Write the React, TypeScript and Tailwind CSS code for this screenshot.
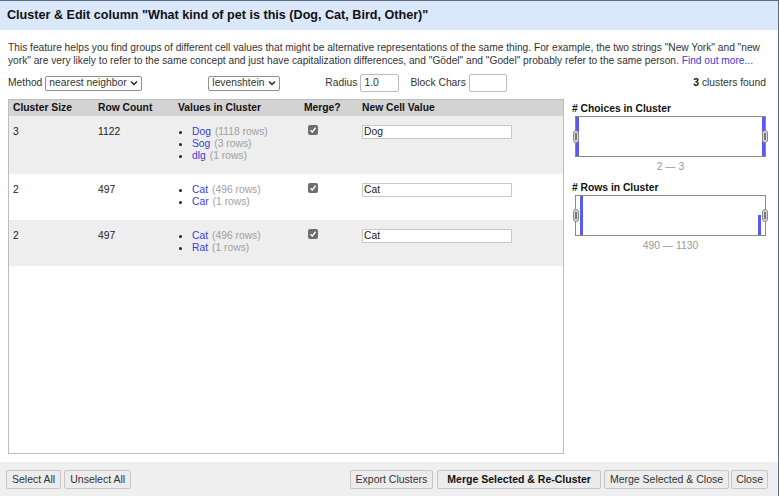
import React from 'react'

type Item = { value: string; count: number }
type Cluster = { size: number; rows: number; items: Item[]; newValue: string }

const clusters: Cluster[] = [
  { size: 3, rows: 1122, newValue: 'Dog', items: [{ value: 'Dog', count: 1118 }, { value: 'Sog', count: 3 }, { value: 'dlg', count: 1 }] },
  { size: 2, rows: 497, newValue: 'Cat', items: [{ value: 'Cat', count: 496 }, { value: 'Car', count: 1 }] },
  { size: 2, rows: 497, newValue: 'Cat', items: [{ value: 'Cat', count: 496 }, { value: 'Rat', count: 1 }] },
]

function FakeSelect({ label, className }: { label: string; className: string }) {
  return (
    <div className={`h-[15px] border border-[#8f8f8f] rounded-[2px] bg-white flex items-center pl-[3px] pr-[3px] justify-between whitespace-nowrap ${className}`}>
      <span className="leading-none">{label}</span>
      <svg width="8" height="6" viewBox="0 0 8 6"><path d="M1 1.5 L4 4.5 L7 1.5" fill="none" stroke="#222" strokeWidth="1.4" /></svg>
    </div>
  )
}

function Check() {
  return (
    <div className="w-[10px] h-[10px] rounded-[2px] bg-[#6e6e6e] flex items-center justify-center">
      <svg width="8" height="8" viewBox="0 0 8 8"><path d="M1.5 4.2 L3.3 6 L6.6 1.8" fill="none" stroke="#fff" strokeWidth="1.4" /></svg>
    </div>
  )
}

function Handle({ side }: { side: 'l' | 'r' }) {
  return (
    <div className={`absolute top-[13px] w-[6px] h-[13px] rounded-[3px] bg-[#d8d8d8] border border-[#888] flex items-center justify-center ${side === 'l' ? 'left-[-3px]' : 'right-[-3px]'}`}>
      <div className="w-[2px] h-[7px] bg-[#777]" />
    </div>
  )
}

function Facet({ title, range, bars }: { title: string; range: string; bars: React.ReactNode }) {
  return (
    <div className="flex flex-col">
      <div className="font-bold text-[#111] leading-[13px] pl-[1px]">{title}</div>
      <div className="relative ml-[4px] mt-[1px] w-[191px] h-[41px] border border-[#8a8a8a] bg-white">
        {bars}
        <Handle side="l" />
        <Handle side="r" />
      </div>
      <div className="text-center text-[#999] leading-[13px] mt-[3px] ml-[4px] w-[191px]">{range}</div>
    </div>
  )
}

function Btn({ children, bold, className = '' }: { children: React.ReactNode; bold?: boolean; className?: string }) {
  return (
    <button className={`h-[19px] border border-[#c6c6c6] rounded-[2px] bg-[#ececec] text-[10.5px] leading-none whitespace-nowrap ${bold ? 'font-bold px-[9px] text-[#111]' : 'px-[5px] text-[#333]'} ${className}`}>
      {children}
    </button>
  )
}

export default function App() {
  return (
    <div className="w-[779px] h-[496px] flex flex-col bg-white border-t border-r border-[#5d6c7c] text-[10.3px] text-[#222] overflow-hidden" style={{ fontFamily: '"Liberation Sans", Arial, sans-serif' }}>
      <div className="h-[29px] shrink-0 bg-[#dbe7fa] flex items-center px-[7px] font-bold text-[12.6px] text-[#111] whitespace-nowrap">
        Cluster &amp; Edit column "What kind of pet is this (Dog, Cat, Bird, Other)"
      </div>

      <div className="flex-1 flex flex-col px-[8px] pt-[11px]">
        <p className="leading-[13px] text-[#333] text-[10.2px] whitespace-nowrap">
          This feature helps you find groups of different cell values that might be alternative representations of the same thing. For example, the two strings "New York" and "new<br />
          york" are very likely to refer to the same concept and just have capitalization differences, and "Gödel" and "Godel" probably refer to the same person. <span className="text-[#3b3bd6]">Find out more...</span>
        </p>

        <div className="flex items-center mt-[7px] h-[18px] text-[#333] whitespace-nowrap">
          <span>Method</span>
          <FakeSelect label="nearest neighbor" className="ml-[3px] w-[97px]" />
          <FakeSelect label="levenshtein" className="ml-[66px] w-[72px]" />
          <span className="ml-[45px]">Radius</span>
          <div className="ml-[3px] w-[39px] h-[18px] border border-[#bbb] rounded-[2px] bg-white flex items-center pl-[3px]">1.0</div>
          <span className="ml-[11px]">Block Chars</span>
          <div className="ml-[3px] w-[38px] h-[18px] border border-[#bbb] rounded-[2px] bg-white" />
          <span className="ml-auto mr-[4px]"><b className="text-[#111]">3</b> clusters found</span>
        </div>

        <div className="flex mt-[7px] gap-[7px]">
          <div className="w-[556px] h-[355px] border border-[#bdbdbd] bg-white">
            <div className="grid grid-cols-[85px_80px_126px_58px_1fr] h-[16px] bg-[#d3d3d3] font-bold text-[#111] items-center pl-[4px]">
              <div>Cluster Size</div>
              <div>Row Count</div>
              <div>Values in Cluster</div>
              <div>Merge?</div>
              <div>New Cell Value</div>
            </div>
            {clusters.map((c, i) => (
              <div key={i} className={`grid grid-cols-[85px_80px_126px_58px_1fr] pl-[4px] pt-[10px] pb-[12px] ${i % 2 === 0 ? 'bg-[#eeeeee]' : 'bg-white'}`}>
                <div className="leading-[12px]">{c.size}</div>
                <div className="leading-[12px]">{c.rows}</div>
                <ul>
                  {c.items.map(it => (
                    <li key={it.value} className="flex items-center leading-[12px] h-[12px]">
                      <span className="w-[3px] h-[3px] rounded-full bg-[#222] ml-[1px] mr-[10px]" />
                      <span className="text-[#3b3bd6]">{it.value}</span>
                      <span className="text-[#a0a0a0] ml-[4px]">({it.count} rows)</span>
                    </li>
                  ))}
                </ul>
                <div className="pl-[4px] -mt-[1px]"><Check /></div>
                <div className="-mt-[1px]">
                  <div className="w-[150px] h-[14px] border border-[#c8c8c8] bg-white flex items-center pl-[1px] leading-none">{c.newValue}</div>
                </div>
              </div>
            ))}
          </div>

          <div className="flex flex-col gap-[8px] pt-[3px]">
            <Facet
              title="# Choices in Cluster"
              range="2 — 3"
              bars={<>
                <div className="absolute left-0 top-0 bottom-0 w-[3px] bg-[#5a5af0]" />
                <div className="absolute right-0 top-0 bottom-0 w-[3px] bg-[#5a5af0]" />
              </>}
            />
            <Facet
              title="# Rows in Cluster"
              range="490 — 1130"
              bars={<>
                <div className="absolute left-[4px] top-0 bottom-0 w-[3px] bg-[#5a5af0]" />
                <div className="absolute right-[4px] bottom-0 h-[20px] w-[3px] bg-[#5a5af0]" />
              </>}
            />
          </div>
        </div>
      </div>

      <div className="h-[34px] shrink-0 bg-[#efefef] flex items-center px-[6px] pt-[1px]">
        <Btn>Select All</Btn>
        <Btn className="ml-[3px]">Unselect All</Btn>
        <div className="flex-1" />
        <Btn>Export Clusters</Btn>
        <Btn bold className="ml-[4px]">Merge Selected &amp; Re-Cluster</Btn>
        <Btn className="ml-[3px]">Merge Selected &amp; Close</Btn>
        <Btn className="ml-[2px] mr-[4px] !px-[4px]">Close</Btn>
      </div>
    </div>
  )
}
